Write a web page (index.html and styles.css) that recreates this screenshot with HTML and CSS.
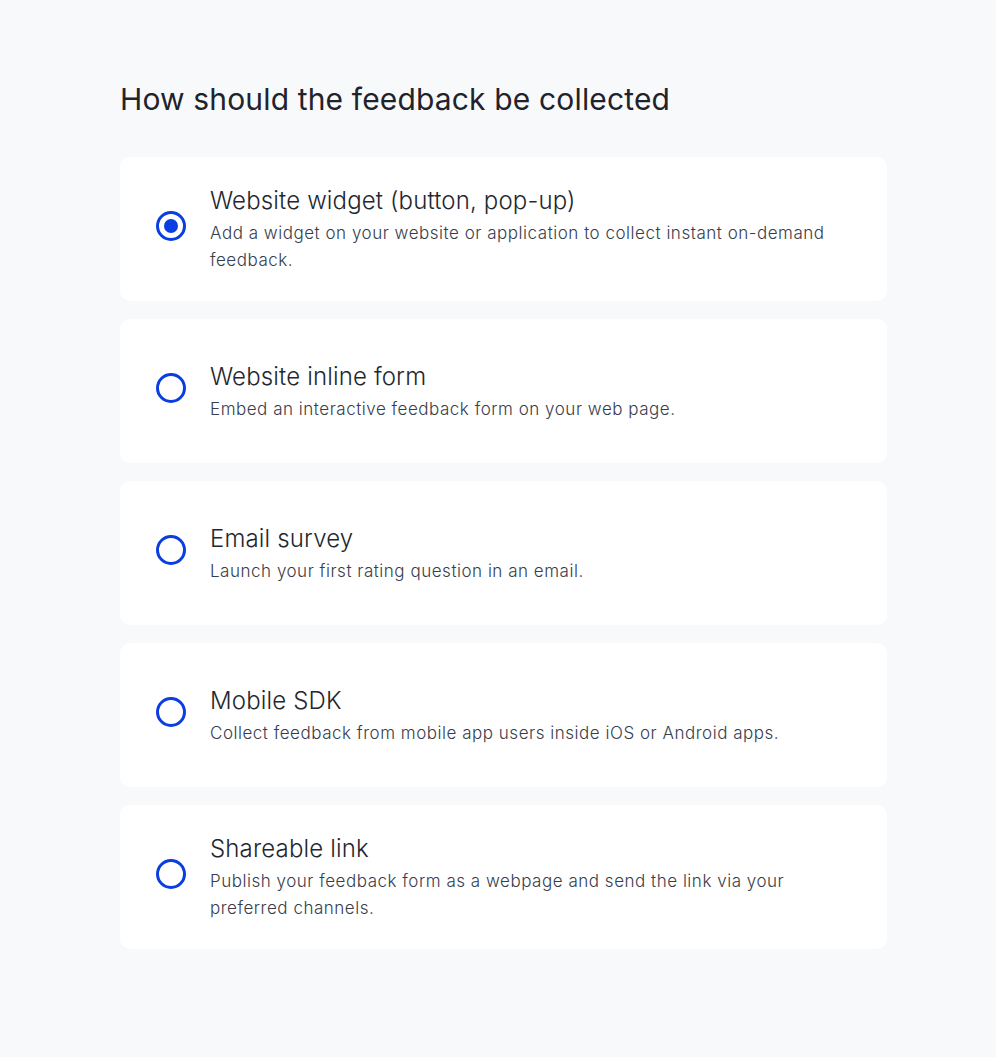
FILE: index.html
```html
<!DOCTYPE html>
<html>
<head>
<meta charset="utf-8">
<link rel="stylesheet" href="styles.css">
</head>
<body>
<main class="page">
  <h1 class="heading">How should the feedback be collected</h1>
  <div class="options">
    <label class="card">
      <span class="radio checked"><span class="dot"></span></span>
      <span class="text">
        <span class="title">Website widget (button, pop-up)</span>
        <span class="desc">Add a widget on your website or application to collect instant on-demand feedback.</span>
      </span>
    </label>
    <label class="card">
      <span class="radio"></span>
      <span class="text">
        <span class="title">Website inline form</span>
        <span class="desc">Embed an interactive feedback form on your web page.</span>
      </span>
    </label>
    <label class="card">
      <span class="radio"></span>
      <span class="text">
        <span class="title">Email survey</span>
        <span class="desc">Launch your first rating question in an email.</span>
      </span>
    </label>
    <label class="card">
      <span class="radio"></span>
      <span class="text">
        <span class="title">Mobile SDK</span>
        <span class="desc">Collect feedback from mobile app users inside iOS or Android apps.</span>
      </span>
    </label>
    <label class="card">
      <span class="radio"></span>
      <span class="text">
        <span class="title">Shareable link</span>
        <span class="desc">Publish your feedback form as a webpage and send the link via your preferred channels.</span>
      </span>
    </label>
  </div>
</main>
</body>
</html>
```

FILE: styles.css
```css
html, body {
  margin: 0;
  padding: 0;
  background: #f8f9fb;
}
body {
  font-family: Inter, "Noto Sans", sans-serif;
  color: #2a2f3a;
}
.page {
  width: 767px;
  margin-left: 120px;
  padding-top: 80px;
}
.heading {
  margin: 0 0 39px 0;
  font-size: 30px;
  line-height: 38px;
  font-weight: 400;
  letter-spacing: 0.15px;
  color: #1f232b;
}
.options {
  display: flex;
  flex-direction: column;
  gap: 18px;
}
.card {
  display: flex;
  align-items: center;
  height: 144px;
  box-sizing: border-box;
  background: #ffffff;
  border-radius: 10px;
  padding: 0 40px 0 36px;
  gap: 24px;
}
.radio {
  flex: none;
  width: 30px;
  height: 30px;
  box-sizing: border-box;
  border: 3px solid #0a3de2;
  border-radius: 50%;
  display: flex;
  align-items: center;
  justify-content: center;
  margin-top: -6px;
}
.dot {
  width: 14px;
  height: 14px;
  border-radius: 50%;
  background: #0a3de2;
}
.text {
  display: flex;
  flex-direction: column;
  padding-top: 1px;
}
.title {
  font-size: 24px;
  line-height: 32px;
  margin-bottom: 3px;
  font-weight: 300;
  letter-spacing: 0.15px;
  color: #23272f;
}
.desc {
  font-size: 17px;
  line-height: 27px;
  font-weight: 300;
  letter-spacing: 0.52px;
  color: #383d4c;
}
```
